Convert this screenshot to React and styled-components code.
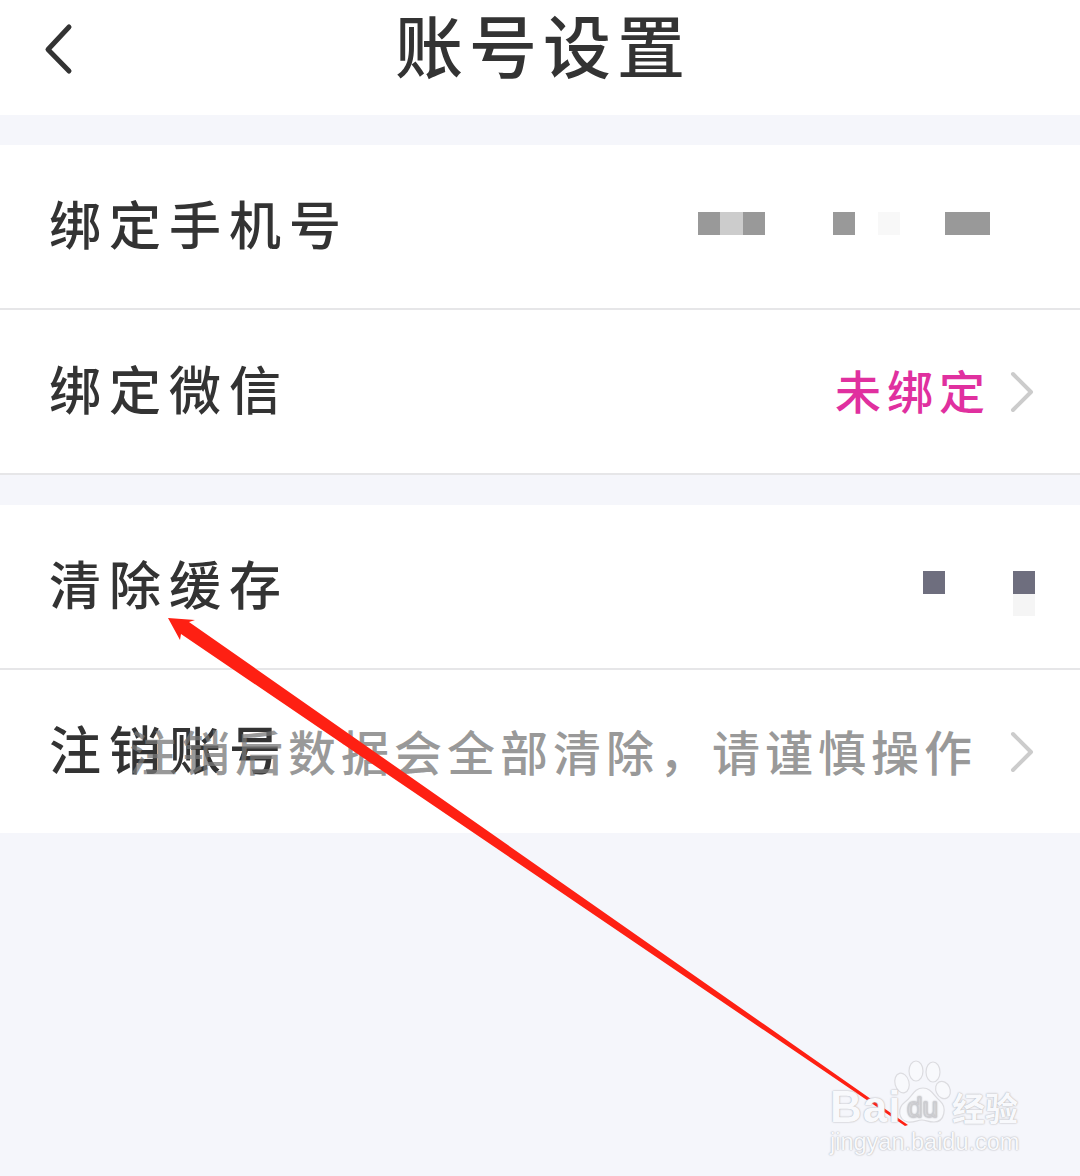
import React from 'react'
import styled, { createGlobalStyle } from 'styled-components'

const CJK = '"Noto Sans CJK SC", "Noto Sans", sans-serif'

const GlobalStyle = createGlobalStyle`
  html, body {
    margin: 0;
    padding: 0;
    background: #f5f6fb;
    font-family: ${CJK};
  }
`

const Page = styled.div`
  position: relative;
  width: 1080px;
  height: 1176px;
  overflow: hidden;
  background: #f5f6fb;
`

const Header = styled.header`
  position: relative;
  height: 115px;
  margin-bottom: 30px;
  background: #fff;
  display: flex;
  align-items: center;
  justify-content: center;
`

const BackIcon = styled.svg`
  position: absolute;
  left: 40px;
  top: 20px;
  width: 38px;
  height: 58px;
`

const Title = styled.h1`
  margin: 0 0 27px;
  padding-left: 6px;
  font-size: 68px;
  font-weight: 500;
  line-height: 84px;
  letter-spacing: 6px;
  color: #333;
`

const Group = styled.section`
  background: #fff;
  margin-bottom: 30px;
`

const Row = styled.div`
  position: relative;
  height: ${p => p.$h || 163}px;
  padding: 0 ${p => p.$right || 45}px 0 49px;
  display: flex;
  align-items: center;
  justify-content: space-between;
  border-bottom: ${p => (p.$plain ? 'none' : '2px solid #e6e6e8')};
`

const Label = styled.span`
  margin-bottom: 8px;
  font-size: 52px;
  font-weight: 500;
  line-height: 1;
  letter-spacing: 8px;
  color: #333;
`

const Side = styled.div`
  display: flex;
  align-items: center;
  gap: 18px;
`

const Value = styled.span`
  margin-bottom: 6px;
  font-size: 46px;
  font-weight: 500;
  line-height: 1;
  letter-spacing: 6px;
  color: #e0309f;
`

const Chevron = styled.svg`
  width: 26px;
  height: 44px;
`

const Mosaic = styled.div`
  display: grid;
  grid-template-columns: repeat(${p => p.$cols}, 22.5px);
  grid-auto-rows: 22.5px;
  margin: ${p => p.$margin};
`

const Cell = styled.i`
  display: block;
  background: ${p => p.$c || 'transparent'};
`

const Toast = styled.div`
  position: absolute;
  left: 129px;
  top: 56px;
  font-size: 48px;
  font-weight: 500;
  line-height: 1;
  letter-spacing: 5px;
  white-space: nowrap;
  color: rgba(120, 120, 120, 0.75);
`

const ArrowLayer = styled.svg`
  position: absolute;
  left: 0;
  top: 0;
  width: 1080px;
  height: 1176px;
  pointer-events: none;
`

const Watermark = styled.div`
  position: absolute;
  left: 830px;
  top: 1060px;
  width: 200px;
  height: 96px;
  color: #f8f9fc;
  text-shadow: 0 0 2px #b4b4b8, 0 0 1px #c4c4c8;
  font-family: "Liberation Sans", sans-serif;
`

const PawIcon = styled.svg`
  position: absolute;
  left: 58px;
  top: 0;
  width: 70px;
  height: 70px;
`

const BaiText = styled.span`
  position: absolute;
  left: 0;
  top: 24px;
  font-size: 44px;
  line-height: 46px;
  font-weight: 700;
  letter-spacing: 1px;
`

const JingText = styled.span`
  position: absolute;
  left: 122px;
  top: 27px;
  font-family: ${CJK};
  font-size: 33px;
  line-height: 40px;
  font-weight: 700;
`

const UrlText = styled.span`
  position: absolute;
  left: 0;
  top: 68px;
  font-size: 23.5px;
  line-height: 28px;
  white-space: nowrap;
`

const phone = ['#999', '#ccc', '#999', 0, 0, 0, '#999', 0, '#f8f8f8', 0, 0, '#999', '#999']
const cache = ['#6e6e7e', 0, 0, 0, '#6e6e7e', 0, 0, 0, 0, '#f5f5f5']

export default function App() {
  return (
    <Page>
      <GlobalStyle />
      <Header>
        <BackIcon viewBox="0 0 38 58" fill="none">
          <path d="M29 7L8 29.500L29 51" stroke="#333" strokeWidth="5" strokeLinecap="round" strokeLinejoin="round" />
        </BackIcon>
        <Title>账号设置</Title>
      </Header>

      <Group>
        <Row $right={90}>
          <Label>绑定手机号</Label>
          <Mosaic $cols={13} $margin="0 0 6px">
            {phone.map((c, i) => <Cell key={i} $c={c || undefined} />)}
          </Mosaic>
        </Row>
        <Row>
          <Label>绑定微信</Label>
          <Side>
            <Value>未绑定</Value>
            <Chevron viewBox="0 0 26 44" fill="none">
              <path d="M4 4L22 22L4 40" stroke="#ccc" strokeWidth="4" strokeLinecap="round" strokeLinejoin="round" />
            </Chevron>
          </Side>
        </Row>
      </Group>

      <Group>
        <Row>
          <Label>清除缓存</Label>
          <Mosaic $cols={5} $margin="14px 0 0">
            {cache.map((c, i) => <Cell key={i} $c={c || undefined} />)}
          </Mosaic>
        </Row>
        <Row $plain>
          <Label>注销账号</Label>
          <Chevron viewBox="0 0 26 44" fill="none">
            <path d="M4 4L22 22L4 40" stroke="#ccc" strokeWidth="4" strokeLinecap="round" strokeLinejoin="round" />
          </Chevron>
          <Toast>{'注销后数据会全部清除\uFF0C请谨慎操作'}</Toast>
        </Row>
      </Group>

      <ArrowLayer viewBox="0 0 1080 1176">
        <polygon points="168,618 195,620 189,622 908,1125 905,1126 181,634 180,640" fill="#fe2013" />
      </ArrowLayer>

      <Watermark>
        <PawIcon viewBox="0 0 70 70" fill="#f8f9fc" stroke="#dcdce0" strokeWidth="1.200">
          <ellipse cx="28" cy="11" rx="7" ry="10" />
          <ellipse cx="45" cy="12" rx="7" ry="10" />
          <ellipse cx="14" cy="23" rx="7" ry="10" transform="rotate(-15 14 23)" />
          <ellipse cx="55" cy="30" rx="7" ry="9" transform="rotate(-25 55 30)" />
          <path d="M35 28C43 28 46 36 52 41C59 47 57 62 46 62C40 62 38 60 34 60C29 60 26 63 20 62C10 60 9 48 17 42C24 37 26 28 35 28Z" />
          <text x="19" y="57" fontFamily="Liberation Sans, sans-serif" fontSize="28" fill="#eeeef2" stroke="#d0d0d4" strokeWidth="0.800">du</text>
        </PawIcon>
        <BaiText>Bai</BaiText>
        <JingText>经验</JingText>
        <UrlText>jingyan.baidu.com</UrlText>
      </Watermark>
    </Page>
  )
}
